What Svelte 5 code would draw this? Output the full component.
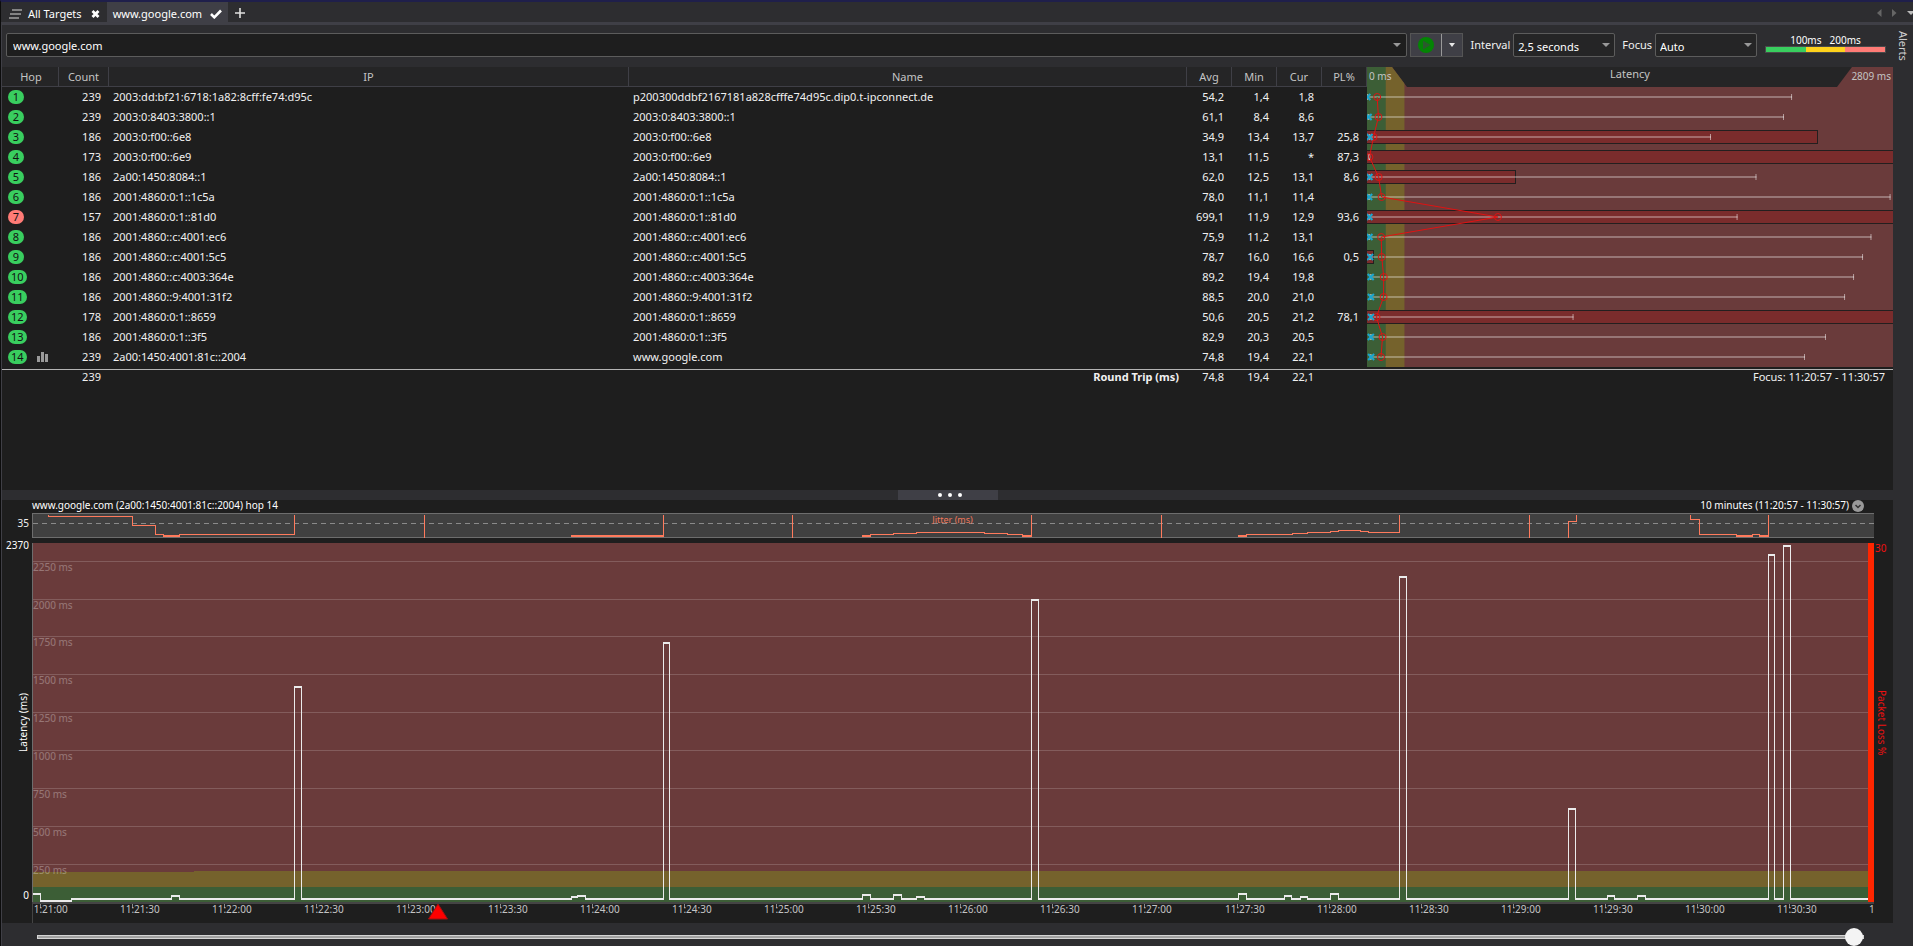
<script lang="ts">
  interface Hop {
    count: number;
    ip: string;
    name?: string;
    avg: number;
    min: number;
    cur: number | null;
    max: number;
    loss?: number;
  }

  type Point = [number, number];

  const hops: Hop[] = [
    { count: 239, ip: '2003:dd:bf21:6718:1a82:8cff:fe74:d95c', name: 'p200300ddbf2167181a828cfffe74d95c.dip0.t-ipconnect.de', avg: 54.2, min: 1.4, cur: 1.8, max: 2270 },
    { count: 239, ip: '2003:0:8403:3800::1', avg: 61.1, min: 8.4, cur: 8.6, max: 2227 },
    { count: 186, ip: '2003:0:f00::6e8', avg: 34.9, min: 13.4, cur: 13.7, max: 1837, loss: 25.8 },
    { count: 173, ip: '2003:0:f00::6e9', avg: 13.1, min: 11.5, cur: null, max: 17, loss: 87.3 },
    { count: 186, ip: '2a00:1450:8084::1', avg: 62.0, min: 12.5, cur: 13.1, max: 2080, loss: 8.6 },
    { count: 186, ip: '2001:4860:0:1::1c5a', avg: 78.0, min: 11.1, cur: 11.4, max: 2796 },
    { count: 157, ip: '2001:4860:0:1::81d0', avg: 699.1, min: 11.9, cur: 12.9, max: 1979, loss: 93.6 },
    { count: 186, ip: '2001:4860::c:4001:ec6', avg: 75.9, min: 11.2, cur: 13.1, max: 2694 },
    { count: 186, ip: '2001:4860::c:4001:5c5', avg: 78.7, min: 16.0, cur: 16.6, max: 2649, loss: 0.5 },
    { count: 186, ip: '2001:4860::c:4003:364e', avg: 89.2, min: 19.4, cur: 19.8, max: 2601 },
    { count: 186, ip: '2001:4860::9:4001:31f2', avg: 88.5, min: 20.0, cur: 21.0, max: 2553 },
    { count: 178, ip: '2001:4860:0:1::8659', avg: 50.6, min: 20.5, cur: 21.2, max: 1103, loss: 78.1 },
    { count: 186, ip: '2001:4860:0:1::3f5', avg: 82.9, min: 20.3, cur: 20.5, max: 2451 },
    { count: 239, ip: '2a00:1450:4001:81c::2004', name: 'www.google.com', avg: 74.8, min: 19.4, cur: 22.1, max: 2339 }
  ];

  // [seconds since 11:20:57, ms], each value holds until the next one
  const latency: Point[] = [
    [0, 53], [2.3, 13], [12.7, 26], [45.3, 40], [47.6, 26], [85.2, 1421], [87.5, 26],
    [175.6, 36], [177.6, 40], [180.2, 26], [205.5, 1710], [207.5, 26],
    [270.2, 50], [272.8, 26], [280.4, 50], [282.9, 26], [287.8, 36], [290.4, 26],
    [325.5, 2000], [327.7, 26], [392.8, 56], [395.4, 26], [407.8, 40], [410.3, 26],
    [413, 34], [415.3, 26], [422.8, 59], [425.4, 26], [445.4, 2152], [447.7, 26],
    [500.4, 620], [502.8, 26], [513, 40], [515.3, 26], [522.8, 40], [525.4, 26],
    [565.6, 2297], [567.6, 26], [570.6, 2353], [572.8, 26], [600, 26]
  ];

  const jitter: Point[][] = [
    [[4.9, 70], [4.9, 54], [32.4, 32], [35, 30], [39.9, 7], [42.4, 2], [47.8, 7], [85.2, 70]],
    [[127.6, 0], [127.6, 70]],
    [[175.4, 2], [205.6, 70]],
    [[247.4, 0], [247.4, 70]],
    [[270.2, 2], [273, 7], [280.3, 9.5], [287.9, 12], [310.1, 9.5], [317.5, 7], [322.4, 2], [325.4, 70]],
    [[367.7, 0], [367.7, 70]],
    [[392.8, 2], [395.5, 7], [410.6, 9.5], [415.3, 12], [422.9, 15], [425.4, 17], [432.6, 15], [435.3, 12], [445.4, 70]],
    [[487.6, 0], [487.6, 70]],
    [[500.5, 0], [500.5, 41], [503, 70]],
    [[540.3, 70], [540.3, 46], [543, 7], [555.1, 2], [560.5, 7], [562.8, 2], [565.7, 70]]
  ];

  const SPAN = 600;
  const MAX_LATENCY = 2370;
  const MAX_HOP = 2809;
  const MAX_LOSS = 30;
  const ROW = 20;
  const gridLines = [250, 500, 750, 1000, 1250, 1500, 1750, 2000, 2250];

  const ticks = Array.from({ length: 21 }, (_, i) => {
    const minute = 21 + Math.floor(i / 2);
    return { t: 2.4 + i * 30, label: `11:${minute}:${i % 2 ? '30' : '00'}` };
  });

  let target = $state('www.google.com');
  let interval = $state('2,5 seconds');
  let focus = $state('Auto');
  let position = $state(100);

  let hopWidth = $state(526);
  let plotWidth = $state(1841);
  let plotHeight = $state(359);

  const hx = (ms: number) => (ms / MAX_HOP) * hopWidth;
  const px = (t: number) => Math.floor((t / SPAN) * plotWidth);
  const py = (ms: number) => Math.floor(plotHeight * (1 - ms / MAX_LATENCY));
  const jy = (v: number) => Math.max(0, Math.round(23 - v / 2.6));

  const fmt = (n: number) => n.toFixed(1).replace('.', ',');

  function steps(points: Point[], y: (v: number) => number) {
    let d = `M${px(points[0][0]) + 0.5} ${y(points[0][1]) + 0.5}`;
    for (const [t, v] of points.slice(1)) d += `H${px(t) + 0.5}V${y(v) + 0.5}`;
    return d;
  }

  function levels(points: Point[], y: (v: number) => number, limit = Infinity) {
    let d = '';
    for (let i = 0; i < points.length - 1; i++) {
      const [t, v] = points[i];
      if (v > 0 && v < limit) d += `M${px(t)} ${y(v)}H${px(points[i + 1][0]) + 1}`;
    }
    return d;
  }

  const avgLine = $derived(hops.map((h, i) => `${hx(h.avg)},${i * ROW + 10}`).join(' '));
</script>

<div class="window">
  <nav class="tabs">
    <a class="tab all" href="#all">
      <svg width="13" height="10" viewBox="0 0 13 10"><path d="M3 1h10M1 5h11M0 9h10" stroke="#a0a0a0" stroke-width="1.6" /></svg>
      All Targets
      <svg class="close" width="9" height="10" viewBox="0 0 9 10"><path d="M1.500 2l6 6M7.500 2l-6 6" stroke="#fff" stroke-width="2.800" /></svg>
    </a>
    <a class="tab active" href="#google">
      www.google.com
      <svg width="12" height="10" viewBox="0 0 12 10"><path d="M1 5l3.300 3.300L11 1.500" fill="none" stroke="#fff" stroke-width="2.600" /></svg>
    </a>
    <button class="add" aria-label="New target">
      <svg width="10" height="10" viewBox="0 0 10 10"><path d="M5 0v10M0 5h10" stroke="#e0e0e0" stroke-width="1.600" /></svg>
    </button>
    <div class="scroll">
      <button aria-label="Scroll left"><svg width="5" height="8" viewBox="0 0 5 8"><path d="M4.500 0v8L0 4z" fill="#666" /></svg></button>
      <button aria-label="Scroll right"><svg width="5" height="8" viewBox="0 0 5 8"><path d="M0 0v8l4.500-4z" fill="#666" /></svg></button>
      <button aria-label="Tab list"><svg width="6" height="4" viewBox="0 0 6 4"><path d="M0 0h8L4 4z" fill="#bbb" /></svg></button>
    </div>
  </nav>

  <div class="body">
    <main>
      <div class="toolbar">
        <div class="combo url">
          <input type="text" aria-label="Target" bind:value={target} />
          <button aria-label="Recent targets"><svg width="8" height="4" viewBox="0 0 8 4"><path d="M0 0h8L4 4z" fill="#999" /></svg></button>
        </div>
        <div class="run">
          <button class="play" aria-label="Start">
            <svg width="16" height="16" viewBox="0 0 16 16"><circle cx="8" cy="8" r="8" fill="#048404" /><path d="M5 3.500v9L12.500 8z" fill="#2a5a2c" /></svg>
          </button>
          <button class="more" aria-label="Start options"><svg width="6" height="4" viewBox="0 0 6 4"><path d="M0 0h6L3 4z" fill="#e8e8e8" /></svg></button>
        </div>
        <label for="interval">Interval</label>
        <div class="combo">
          <select id="interval" bind:value={interval}>
            <option>1 second</option>
            <option>2,5 seconds</option>
            <option>5 seconds</option>
          </select>
          <svg class="arrow" width="8" height="4" viewBox="0 0 8 4"><path d="M0 0h8L4 4z" fill="#999" /></svg>
        </div>
        <label for="focus">Focus</label>
        <div class="combo">
          <select id="focus" bind:value={focus}>
            <option>Auto</option>
            <option>10 minutes</option>
          </select>
          <svg class="arrow" width="8" height="4" viewBox="0 0 8 4"><path d="M0 0h8L4 4z" fill="#999" /></svg>
        </div>
        <div class="legend">
          <div class="marks"><span>100ms</span><span>200ms</span></div>
          <div class="scale"><i class="good"></i><i class="warn"></i><i class="bad"></i></div>
        </div>
      </div>

      <section class="hops">
        <table>
          <colgroup>
            <col class="c-hop" /><col class="c-count" /><col class="c-ip" /><col />
            <col class="c-num" /><col class="c-num" /><col class="c-num" /><col class="c-num" />
            <col class="c-latency" />
          </colgroup>
          <thead>
            <tr>
              <th>Hop</th>
              <th>Count</th>
              <th>IP</th>
              <th>Name</th>
              <th>Avg</th>
              <th>Min</th>
              <th>Cur</th>
              <th>PL%</th>
              <th class="latency" bind:clientWidth={hopWidth}>
                <svg width={hopWidth} height="20" role="img" aria-label="Latency scale">
                  <clipPath id="corner"><path d="M0 0h25l15 20H0z" /></clipPath>
                  <g clip-path="url(#corner)">
                    <rect width="45" height="20" fill="#6a3b3b" />
                    <rect width={hx(200)} height="20" fill="#75622c" />
                    <rect width={hx(100)} height="20" fill="#3c5e36" />
                  </g>
                  <path d="M{hopWidth - 41} 0H{hopWidth}V20H{hopWidth - 56}z" fill="#6a3b3b" />
                  <text class="edge" x="2" y="13">0 ms</text>
                  <text class="title" x={hopWidth / 2} y="11">Latency</text>
                  <text class="edge end" x={hopWidth - 2} y="13">2809 ms</text>
                </svg>
              </th>
            </tr>
          </thead>
          <tbody>
            {#each hops as hop, i}
              <tr>
                <td class="hop">
                  <span class="badge" class:alert={i === 6}>{i + 1}</span>
                  {#if i === 13}
                    <svg class="bars" width="12" height="10" viewBox="0 0 12 10"><path d="M0 4h3v6H0zM4 0h3v10H4zM8 2h3v8H8z" fill="#9a9a9a" /></svg>
                  {/if}
                </td>
                <td class="num">{hop.count}</td>
                <td>{hop.ip}</td>
                <td>{hop.name ?? hop.ip}</td>
                <td class="num">{fmt(hop.avg)}</td>
                <td class="num">{fmt(hop.min)}</td>
                <td class="num">{hop.cur === null ? '*' : fmt(hop.cur)}</td>
                <td class="num">{hop.loss ? fmt(hop.loss) : ''}</td>
                {#if i === 0}
                  <td class="graph" rowspan={hops.length}>
                    <svg width={hopWidth} height={hops.length * ROW} role="img" aria-label="Latency per hop">
                      <rect width={hopWidth} height="280" fill="#6a3b3b" />
                      <rect width={hx(200)} height="280" fill="#75622c" />
                      <rect width={hx(100)} height="280" fill="#3c5e36" />
                      {#each hops as h, n}
                        {@const y = n * ROW + 10}
                        {#if h.loss}
                          <rect class="loss" x="-1" y={y - 6.5} width={h.loss >= MAX_LOSS ? hopWidth + 3 : Math.floor((h.loss / MAX_LOSS) * hopWidth) - 0.5} height="13" />
                        {/if}
                        <rect class="range" x={hx(h.min)} y={y - 1} width={hx(h.max - h.min)} height="2" />
                        <rect class="cap" x={hx(h.min) - 1} y={y - 3} width="2" height="6" />
                        <rect class="cap" x={hx(h.max) - 1} y={y - 3} width="1" height="6" />
                      {/each}
                      <polyline class="avg" points={avgLine} />
                      {#each hops as h, n}
                        {@const y = n * ROW + 10}
                        <circle class="avg" cx={hx(h.avg)} cy={y} r="3.500" />
                        {#if h.cur !== null}
                          <path class="cur" d="M{hx(h.cur) - 3} {y - 3}l6 6m0 -6l-6 6" />
                        {/if}
                      {/each}
                    </svg>
                  </td>
                {/if}
              </tr>
            {/each}
          </tbody>
          <tfoot>
            <tr>
              <td></td>
              <td class="num">239</td>
              <td></td>
              <td class="num total">Round Trip (ms)</td>
              <td class="num">74,8</td>
              <td class="num">19,4</td>
              <td class="num">22,1</td>
              <td></td>
              <td class="num">Focus: 11:20:57 - 11:30:57</td>
            </tr>
          </tfoot>
        </table>
      </section>

      <div class="splitter">
        <button aria-label="Resize panes"><i></i><i></i><i></i></button>
      </div>

      <section class="timeline">
        <header>
          <span>www.google.com (2a00:1450:4001:81c::2004) hop 14</span>
          <span class="period">10 minutes (11:20:57 - 11:30:57)</span>
          <button aria-label="Change period">
            <svg width="12" height="12" viewBox="0 0 12 12"><circle cx="6" cy="6" r="6" fill="#999" /><path d="M3.500 5L6 7.500 8.500 5" fill="none" stroke="#333" stroke-width="1.500" /></svg>
          </button>
        </header>

        <div class="jitter-max">35</div>
        <div class="jitter">
          <svg width={plotWidth} height="23" role="img" aria-label="Jitter">
            <line class="half" x1="0" y1="9.500" x2={plotWidth} y2="9.500" />
            {#each jitter as run}
              <path class="trace" d={steps(run, jy)} />
              <path class="trace thick" d={levels(run, jy, 3)} />
            {/each}
            <text x={plotWidth / 2 - 1} y="9">Jitter (ms)</text>
          </svg>
        </div>

        <div class="gutter">
          <span>2370</span>
          <span class="axis-name">Latency (ms)</span>
          <span class="zero">0</span>
        </div>
        <div class="plot" bind:clientWidth={plotWidth} bind:clientHeight={plotHeight}>
          <svg width={plotWidth} height={plotHeight} role="img" aria-label="Latency over time">
            <rect width={plotWidth} height={plotHeight} fill="#6a3b3b" />
            <rect y={py(200)} width={plotWidth} height={py(100) - py(200) + 1} fill="#75622c" />
            <rect y={py(200)} width={px(52.5)} height="1" fill="#6a3b3b" />
            <rect y={py(100) + 1} width={plotWidth} height={plotHeight - py(100)} fill="#3c5e36" />
            {#each gridLines as ms}
              <rect class="grid" y={py(ms)} width={plotWidth} height="1" />
              <text x="0" y={py(ms) + 10}>{ms} ms</text>
            {/each}
            <path class="ping" d={steps(latency, py)} />
            <path class="ping thick" d={levels(latency, (v) => py(v) + 1)} />
            <rect x={plotWidth - 6} width="6" height={plotHeight} fill="#ff2600" />
          </svg>
        </div>
        <div class="loss-axis">
          <span>30</span>
          <span class="axis-name">Packet Loss %</span>
        </div>

        <div class="times">
          <svg width={plotWidth} height="19" role="img" aria-label="Time axis">
            {#each ticks as tick}
              <rect x={px(tick.t)} width="1" height="4" fill="#8a8a8a" />
              <text x={px(tick.t) - 12} y="9">{tick.label}</text>
            {/each}
            <path d="M{px(132.2)} 0l9.500 15h-19z" fill="#f00" stroke="#a01010" />
          </svg>
        </div>
      </section>

      <div class="slider">
        <input type="range" min="0" max="100" aria-label="Timeline position" bind:value={position} />
      </div>
    </main>

    <aside><button>Alerts</button></aside>
  </div>
</div>

<style>
  :global(body) {
    margin: 0;
    background: #2d2d30;
  }
  .window {
    display: flex;
    flex-direction: column;
    height: 100vh;
    min-height: 760px;
    box-sizing: border-box;
    border-top: 2px solid #1f1f4b;
    border-left: 1px solid #0c0c0c;
    overflow: hidden;
    background: #2d2d30;
    color: #f1f1f1;
    font-family: "Noto Sans", "Segoe UI", sans-serif;
    font-size: 11px;
    line-height: 20px;
  }
  svg {
    display: block;
    flex: none;
  }
  button {
    display: flex;
    align-items: center;
    justify-content: center;
    padding: 0;
    border: 0;
    background: none;
    color: inherit;
    font: inherit;
    cursor: pointer;
  }

  .tabs {
    display: flex;
    flex: none;
    height: 20px;
    border-bottom: 3px solid #3f3f46;
  }
  .tab {
    display: flex;
    align-items: center;
    gap: 8px;
    padding: 3px 6px 0;
    line-height: 17px;
    color: #fff;
    text-decoration: none;
  }
  .all { gap: 6px; padding: 3px 7px 0 8px; }
  .close { margin-left: 3px; }
  .active { background: #3f3f46; }
  .add { padding: 2px 6px 0 7px; }
  .scroll {
    display: flex;
    gap: 10px;
    margin-left: auto;
    padding-top: 2px;
  }

  .body {
    display: flex;
    flex: 1;
    min-height: 0;
  }
  main {
    display: flex;
    flex: 1;
    flex-direction: column;
    min-width: 0;
    border-left: 1px solid #3f3f46;
  }
  aside { width: 20px; }
  aside button {
    width: 20px;
    padding: 6px 0;
    color: #d0d0d0;
    writing-mode: vertical-rl;
  }

  .toolbar {
    display: flex;
    flex: none;
    gap: 3px;
    height: 24px;
    padding: 8px 7px 10px 4px;
    line-height: 24px;
  }
  .toolbar label { padding-left: 4px; }
  .combo {
    position: relative;
    display: flex;
    box-sizing: border-box;
    width: 102px;
    border: 1px solid #5c5c5c;
    border-radius: 2px;
    background: #252526;
  }
  .url { flex: 1; background: #1e1e1e; }
  .url button { width: 18px; }
  .combo input, .combo select {
    flex: 1;
    min-width: 0;
    padding: 2px 6px 0;
    border: 0;
    outline: none;
    background: none;
    color: #fff;
    font: inherit;
  }
  .combo select { appearance: none; padding: 1px 4px 0; }
  .combo option { background: #252526; }
  .arrow {
    position: absolute;
    top: 9px;
    right: 4px;
    pointer-events: none;
  }
  .run {
    display: flex;
    box-sizing: border-box;
    width: 53px;
    border: 1px solid #555;
    background: #3f3f46;
  }
  .play { flex: 1; }
  .more { width: 21px; border-left: 1px solid #999; }
  .legend { width: 121px; padding-left: 5px; }
  .marks {
    display: flex;
    justify-content: center;
    gap: 8px;
    height: 13px;
    line-height: 15px;
    font-size: 10px;
    color: #fff;
  }
  .scale {
    display: flex;
    height: 5px;
    border: 1px solid #4a4a4a;
  }
  .scale i { flex: 1; }
  .good { background: #39ce5f; }
  .warn { background: #ffd21c; }
  .bad { background: #ff7b76; }

  .hops, .timeline {
    flex: 1 1 0;
    min-height: 0;
    background: #1e1e1e;
  }
  .hops { overflow: hidden; }
  table {
    width: 100%;
    table-layout: fixed;
    border-spacing: 0;
  }
  .c-hop { width: 57px; }
  .c-count { width: 50px; }
  .c-ip { width: 27.5%; }
  .c-num { width: 45px; }
  .c-latency { width: 526px; }
  th, td {
    height: 20px;
    padding: 0 4px;
    box-sizing: border-box;
    white-space: nowrap;
    overflow: hidden;
    line-height: 20px;
  }
  th {
    padding: 0;
    border-right: 1px solid #3f3f46;
    border-bottom: 1px solid #3f3f46;
    background: #252526;
    color: #c4c4c4;
    font-weight: 400;
    line-height: 19px;
  }
  th:first-child { padding-left: 2px; }
  th.latency { border: 0; }
  .latency text { fill: #c4c4c4; }
  .latency .edge { font-size: 10px; }
  .title { text-anchor: middle; }
  .end { text-anchor: end; }
  .num { padding-right: 8px; text-align: right; }
  .hop {
    padding-left: 6px;
    font-size: 0;
  }
  .badge {
    display: inline-block;
    box-sizing: border-box;
    min-width: 16px;
    padding: 0 3px;
    border-radius: 7px;
    background: #39ce5f;
    color: #111;
    font-size: 11px;
    line-height: 14px;
    text-align: center;
    vertical-align: middle;
  }
  .badge.alert { background: #ff7b76; }
  .bars {
    display: inline-block;
    margin-left: 10px;
    vertical-align: middle;
  }
  .graph {
    padding: 0;
    vertical-align: top;
  }
  tbody tr:last-child td { padding-bottom: 2px; height: 22px; }
  tfoot td {
    height: 15px;
    border-top: 1px solid #b4b4b4;
    line-height: 14px;
    overflow: visible;
  }
  .total { font-weight: 700; }
  .loss { fill: #7a2c2c; stroke: #231f1f; }
  .range { fill: #fff; opacity: 0.3; }
  .cap { fill: #fff; opacity: 0.5; }
  .avg { fill: none; stroke: #e01212; stroke-width: 1; }
  .cur { fill: none; stroke: #1ba6cf; stroke-width: 2; }

  .splitter {
    display: flex;
    flex: none;
    justify-content: center;
    height: 10px;
    background: #2d2d30;
  }
  .splitter button {
    gap: 6px;
    width: 100px;
    padding-left: 4px;
    background: #3f3f46;
  }
  .splitter i {
    width: 4px;
    height: 4px;
    border-radius: 2px;
    background: #fff;
  }

  .timeline {
    display: grid;
    grid-template-columns: 30px minmax(0, 1fr) 19px;
    grid-template-rows: 13px 25px 5px minmax(0, 1fr) 21px;
    font-size: 10px;
    line-height: 13px;
  }
  .timeline header {
    grid-column: 2;
    display: flex;
    gap: 3px;
    padding-right: 10px;
    line-height: 11px;
    color: #fff;
  }
  .timeline header button { height: 12px; }
  .period { margin-left: auto; }
  .jitter-max {
    grid-area: 2 / 1;
    padding: 4px 3px 0 0;
    text-align: right;
  }
  .jitter {
    grid-area: 2 / 2;
    border: 1px solid #6d6d6d;
    border-right: 0;
    background: #404040;
  }
  .jitter svg { overflow: visible; }
  .jitter text {
    fill: #f0775a;
    font-size: 9px;
    text-anchor: middle;
  }
  .half { stroke: #8a8a8a; stroke-dasharray: 5 4; }
  .trace {
    fill: none;
    stroke: #ff7a5c;
    shape-rendering: crispEdges;
  }
  .gutter, .loss-axis {
    display: grid;
    grid-template-rows: minmax(0, 1fr) auto minmax(0, 1fr);
    grid-area: 4 / 1;
    justify-items: end;
    padding-right: 3px;
    line-height: 12px;
    color: #fff;
  }
  .gutter { margin-top: -4px; }
  .zero { align-self: end; padding-bottom: 1px; }
  .loss-axis {
    grid-area: 4 / 3;
    justify-items: start;
    padding: 0 0 0 1px;
    line-height: 10px;
    color: #f01010;
  }
  .axis-name { writing-mode: vertical-rl; }
  .gutter .axis-name { rotate: 180deg; padding-bottom: 4px; }
  .loss-axis .axis-name { padding-left: 2px; }
  .plot {
    grid-area: 4 / 2;
    border-left: 1px solid #6d6d6d;
    overflow: hidden;
  }
  .plot text { fill: #fff; opacity: 0.3; }
  .grid { fill: #fff; opacity: 0.17; }
  .ping {
    fill: none;
    stroke: #ebebeb;
    shape-rendering: crispEdges;
  }
  .thick { stroke-width: 2; }
  .times {
    grid-area: 5 / 2;
    border-top: 2px solid #444;
    border-left: 1px solid #444;
    overflow-x: clip;
    overflow-y: visible;
  }
  .times svg { overflow: visible; }
  .times text { fill: #c4c4c4; }

  .slider {
    display: flex;
    flex: none;
    align-items: center;
    height: 23px;
    padding: 4px 29px 0 35px;
    box-sizing: border-box;
    overflow: hidden;
  }
  .slider input {
    appearance: none;
    flex: 1;
    height: 18px;
    margin: 0;
    background: none;
  }
  .slider input::-webkit-slider-runnable-track {
    height: 4px;
    box-sizing: border-box;
    border: 1px solid #d4d4d4;
    background: #a0a0a0;
  }
  .slider input::-webkit-slider-thumb {
    appearance: none;
    width: 18px;
    height: 18px;
    margin-top: -8px;
    border-radius: 9px;
    background: #f4f4f4;
  }
</style>
